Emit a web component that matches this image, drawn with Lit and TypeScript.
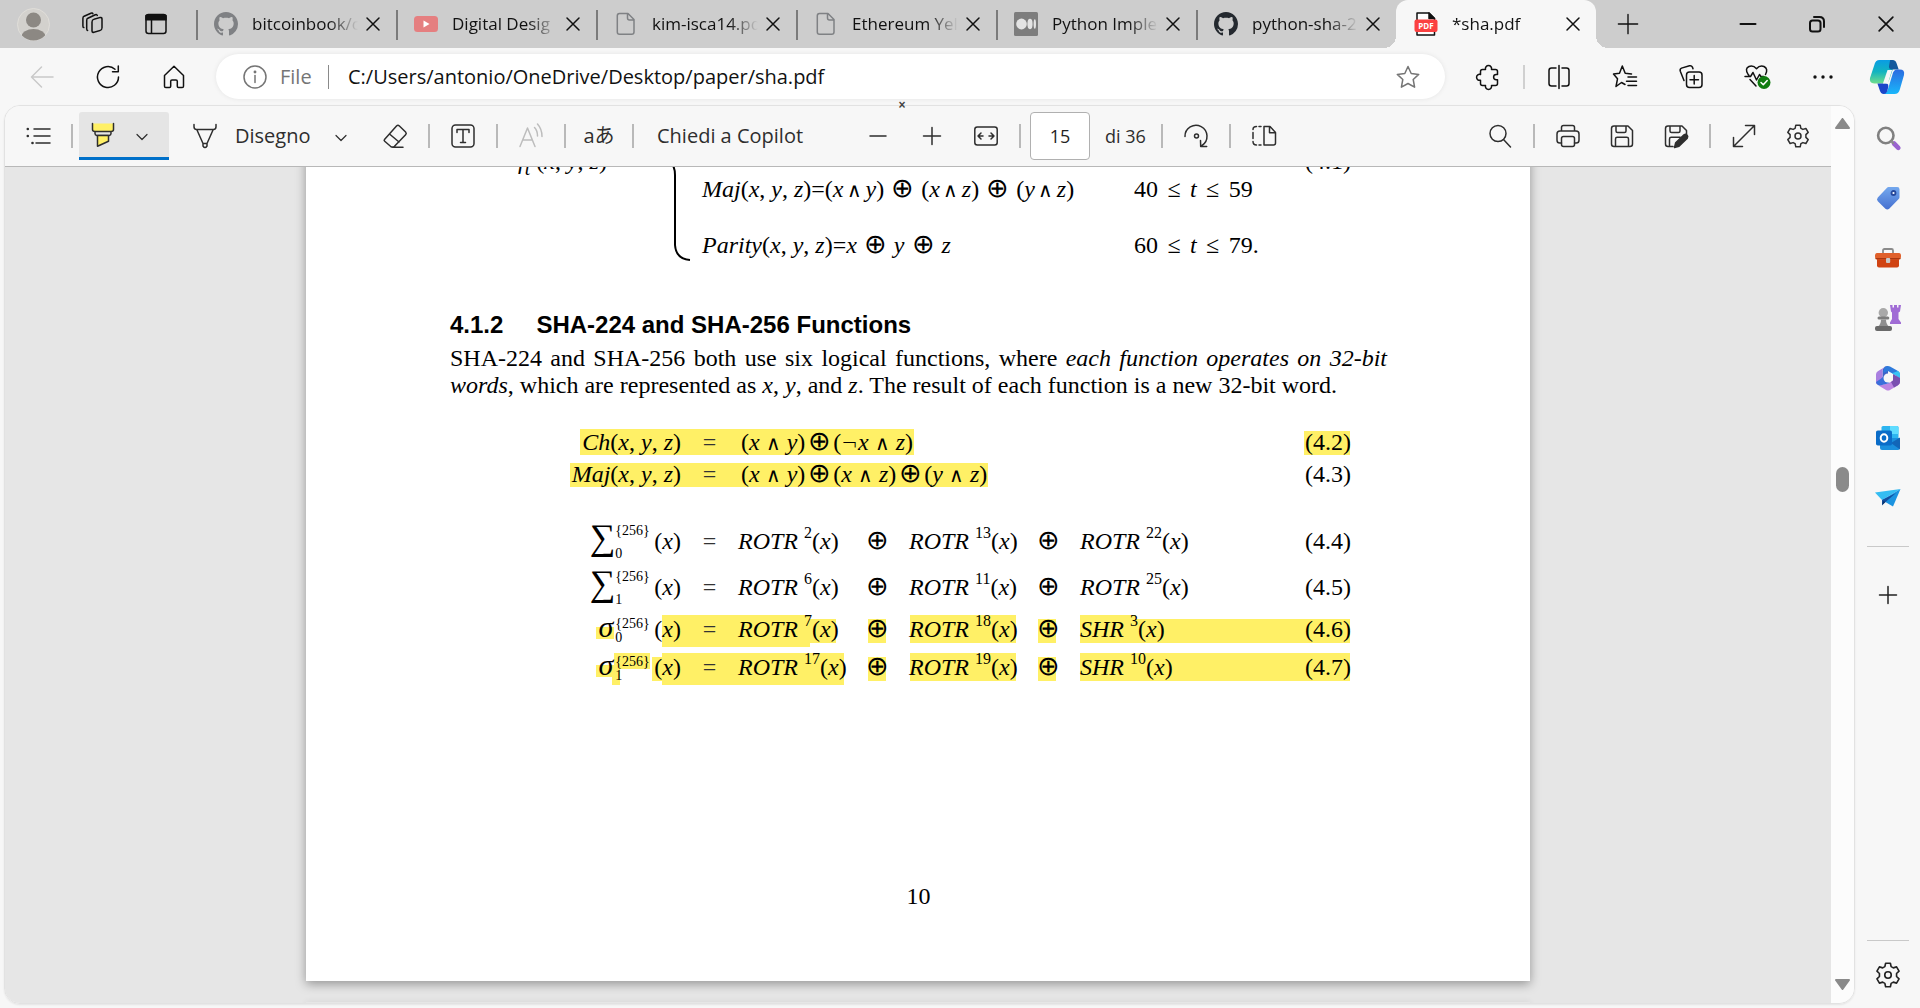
import { LitElement, html, css, svg, nothing, TemplateResult } from "lit";
import { customElement, property } from "lit/decorators.js";

type Shape = ReturnType<typeof svg>;

const plainIcons: Record<string, Shape> = {
  workspaces: svg`<rect x="11" y="6.500" width="10" height="13" rx="2" transform="skewY(-16) translate(0 4.500)"/><path d="M6.600 18.400q-.9-.2-.9-1.700V8.400q0-1.600 1.200-2.200l7.400-3.400q1.600-.6 2 .6"/><path d="M2.800 15.600q-.9-.2-.9-1.700V6.400q0-1.600 1.200-2.200l6.800-3q1.600-.6 2 .6"/>`,
  tabActions: svg`<rect x="2" y="2.500" width="20" height="19" rx="2.500"/><path d="M2 3.500h20v4.300H2z" fill="currentColor"/><path d="M7.500 8v13"/>`,
  back: svg`<path d="M23 12H2M11.500 2 1.500 12l10 10"/>`,
  refresh: svg`<path d="M22.500 12A10.500 10.500 0 1 1 19 4.200M22.300 1v5.700h-5.800"/>`,
  home: svg`<path d="M2.500 10.500 12 1.300l9.500 9.200v10.700q0 1.300-1.300 1.300h-3.700q-1.200 0-1.200-1.200v-5.100q0-1.300-1.300-1.300h-4q-1.300 0-1.300 1.300v5.100q0 1.200-1.200 1.200H3.800q-1.300 0-1.300-1.300z"/>`,
  info: svg`<circle cx="12" cy="12" r="11"/><path d="M12 10.500v7"/><circle cx="12" cy="7" r=".7" fill="currentColor"/>`,
  star: svg`<path d="m12 1.500 3.200 7 7.500.9-5.500 5.100 1.400 7.700-6.600-3.700-6.600 3.700 1.400-7.700L1.300 9.400l7.500-.9z"/>`,
  puzzle: svg`<path d="M3.500 6.500q0-2 2-2h3a3.100 3.100 0 1 1 6 0h4q2 0 2 2V9.500h-1.300a2.600 2.600 0 1 0 0 5.200h1.300v3.800q0 2-2 2h-4a3.100 3.100 0 1 1-6 0h-3q-2 0-2-2v-3.300a3 3 0 1 1 0-5.700z"/>`,
  split: svg`<path d="M9 3H4.500Q2 3 2 5.500v13Q2 21 4.500 21H9M15 3h4.500Q22 3 22 5.500v13q0 2.500-2.500 2.500H15M12 .5v23"/>`,
  favorites: svg`<path d="m12 19.500-3.500-2-5.500 4 1.500-7.700L.5 9l6-.8L9.300 1l2.900 7.200 6.300.8M15 12h8.500M13.500 16.300h10M15 20.600h8.500"/>`,
  collections: svg`<rect x="7.500" y="7" width="15.500" height="15.500" rx="3"/><path d="M15.200 10.500v8.500M11 14.700h8.500M5 15.500 1.300 6.200Q.6 4 2.500 3.100L10.500.8q2-.5 2.900 1.300l.6 1.700"/>`,
  dots: svg`<g fill="currentColor" stroke="none"><circle cx="4" cy="12" r="1.700"/><circle cx="12" cy="12" r="1.700"/><circle cx="20" cy="12" r="1.700"/></g>`,
  list: svg`<path d="M8 5h16M8 12h16M10 19h14"/><g fill="currentColor" stroke="none"><circle cx="1.800" cy="5" r="1.300"/><circle cx="1.800" cy="12" r="1.300"/><circle cx="6.500" cy="19" r="1.300"/></g>`,
  chevron: svg`<path d="m7 11.500 5 5 5-5" stroke-width="1.200"/>`,
  pen: svg`<path d="M1 .5v2.300Q1 5.500 3.500 5.500h17Q23 5.500 23 2.800V.5M4 6l6 13.500M20 6l-6 13.500M10 19.500h4V22q-2 3-4 0z"/>`,
  eraser: svg`<path d="m1.500 15.500 12-13.500Q15 .6 16.400 2l6.200 6q1.300 1.400 0 2.800L11.500 22.300q-2 1.600-4 0l-5.800-5q-1-.9-.2-1.800zM6.500 10l9.500 8M9.500 23.200H20"/>`,
  textBox: svg`<rect x="1" y="1" width="22" height="22" rx="3.500"/><path d="M6 8.500V5.500h12v3M12 5.500v13M9.500 18.500h5"/>`,
  readAloud: svg`<path d="M1 22.500 8.500 4 16 22.500M3.600 16h9.800M15.500 3.500q3 3 3 8.500M18.500 0q4.500 5 4.500 12.500"/>`,
  minus: svg`<path d="M4 12h16"/>`,
  plus: svg`<path d="M3.500 12h17M12 3.500v17"/>`,
  fit: svg`<rect x="0.800" y="3" width="22.400" height="18" rx="2.500"/><path d="M4 12h5M7 9l-3 3 3 3M20 12h-5M17 9l3 3-3 3"/>`,
  rotate: svg`<path d="M1 12.500A11 11 0 1 1 18 21.500M16.500 16.500 16.700 22.500h6"/><circle cx="12.500" cy="12" r="2"/>`,
  pageView: svg`<path d="M12 2.500h6l5.500 6V19q0 2-2 2H12zM17.500 2.500v6.200h6M9 2.500H7M4.500 2.500Q1 2.500 1 5.500M1 8.500v6M1 17.500q0 3.500 3.500 3.500M7 21h2"/>`,
  search: svg`<circle cx="10" cy="9.500" r="8"/><path d="m15.500 15.500 7 7.500"/>`,
  print: svg`<path d="M5.500 19H3.800Q1 19 1 16.200V10q0-3 3-3h16q3 0 3 3v6.200q0 2.800-2.800 2.800h-1.700M5.500 6.500v-3q0-2 2-2h9q2 0 2 2v3"/><rect x="5.500" y="12.500" width="13" height="10" rx="2"/>`,
  save: svg`<path d="M4 2h14l4.500 4.500V20q0 2.500-2.500 2.500H4Q1.500 22.500 1.500 20V4.500Q1.500 2 4 2zM6 2.500V7q0 1.500 1.500 1.500h7Q16 8.500 16 7V2.500M5.500 22v-7q0-1.700 1.700-1.700h9.600q1.700 0 1.700 1.700v7"/>`,
  saveAs: svg`<path d="M9 22.500H4Q1.500 22.500 1.500 20V4.500Q1.500 2 4 2h14l4.500 4.500V10M6 2.500V7q0 1.500 1.500 1.500h7Q16 8.500 16 7V2.500M5.500 22v-7q0-1.700 1.700-1.700h9"/><path d="m10.500 23.500 1.200-4.700 8.300-8q1.700-1 3 .3t.3 3l-8.300 8.200z" fill="currentColor"/>`,
  expand: svg`<path d="M22.500 1.500 1.500 22.500M13.500 1.500h9v9M1.500 13.500v9h9"/>`,
  gear: svg`<path d="M9.800 1.200h4.400l.7 3.100 2 1.100 3-.9 2.300 3.900-2.300 2.200v2.800l2.300 2.200-2.300 3.900-3-.9-2 1.100-.7 3.100H9.800l-.7-3.100-2-1.100-3 .9-2.300-3.900 2.300-2.200v-2.800L1.800 8.400l2.300-3.900 3 .9 2-1.100z"/><circle cx="12" cy="12" r="3"/>`,
  winMin: svg`<path d="M4.500 12h15" stroke-width="2"/>`,
  winRestore: svg`<g stroke-width="2"><rect x="5" y="8.500" width="10.500" height="11" rx="2.500"/><path d="M9 5h5.500q4.500 0 4.500 4.500V15"/></g>`,
  winClose: svg`<path d="m4.500 4.500 15 15M19.500 4.500l-15 15" stroke-width="1.800"/>`,
  close: svg`<path d="m6 6 12 12M18 6 6 18"/>`,
  addTab: svg`<path d="M12 1.500v21M1.500 12h21"/>`,
  file: svg`<path d="M5.500 1.500h8.500l6 6V20q0 2.300-2.300 2.300H5.500Q3.300 22.300 3.300 20V3.800q0-2.300 2.200-2.300zM13.500 1.500V6q0 2 2 2H20"/>`,
};

const github = svg`<path transform="scale(1.5)" fill="currentColor" stroke="none" d="M8 0C3.580 0 0 3.580 0 8c0 3.540 2.290 6.530 5.470 7.590.4.070.55-.17.55-.38 0-.19-.010-.82-.010-1.490-2.010.37-2.530-.49-2.690-.94-.090-.23-.48-.94-.82-1.130-.28-.15-.68-.52-.010-.53.63-.010 1.080.58 1.230.82.72 1.210 1.870.87 2.330.66.070-.52.28-.87.510-1.070-1.780-.2-3.640-.89-3.640-3.950 0-.87.31-1.590.82-2.150-.080-.2-.36-1.020.080-2.120 0 0 .67-.21 2.200.82.64-.18 1.320-.27 2-.27s1.360.090 2 .27c1.530-1.040 2.200-.82 2.200-.82.44 1.100.16 1.920.080 2.120.51.56.82 1.270.82 2.150 0 3.070-1.870 3.750-3.650 3.950.29.25.54.73.54 1.480 0 1.070-.010 1.930-.010 2.200 0 .21.15.46.55.38A8.010 8.010 0 0 0 16 8c0-4.420-3.580-8-8-8z"/>`;

const colourIcons: Record<string, Shape> = {
  github,
  youtube: svg`<g stroke="none"><rect x="0" y="4" width="24" height="16" rx="3.500" fill="#e57f80"/><path d="m9.500 8.500 6 3.500-6 3.500z" fill="#fff"/></g>`,
  medium: svg`<g stroke="none"><rect width="24" height="24" rx="1.500" fill="#7d7d7d"/><ellipse cx="7.500" cy="12" rx="5.300" ry="5.400" fill="#e4e4e4"/><ellipse cx="16" cy="12" rx="2.600" ry="5.200" fill="#e4e4e4"/><ellipse cx="20.800" cy="12" rx="1.200" ry="4.700" fill="#e4e4e4"/></g>`,
  pdf: svg`<path d="M3 1h12l5.500 5.500V23H3z" fill="#fff" stroke="#111" stroke-width="1.500"/><path d="M15 1v5.500h5.500z" fill="#111" stroke="#111"/><rect x=".5" y="7.500" width="23" height="12.500" rx="2" fill="#fb4141" stroke="none"/><text x="12" y="17" text-anchor="middle" class="pdf" stroke="none" fill="#fff">PDF</text>`,
  health: svg`<path d="m4 10.500-1-1.300Q-.5 3.500 4 1.500q4.300-1.500 7.500 2.300Q14.700 0 19 1.500q4.500 2.300 1.500 8M0 11.500h5.500L8 7.500l3.500 7.500 3-5.500 1.300 2h3M5 14.500l6 6.500"/><circle cx="19" cy="17.500" r="6.500" fill="#107c10" stroke="none"/><path d="m16 17.500 2.300 2.300 3.900-4.300" stroke="#fff"/>`,
  highlighter: svg`<path d="M2 .5h20V7q0 2-2 2H4Q2 9 2 7z" fill="#fff066" stroke="none"/><path d="M1.500.5v6Q1.500 8.500 4 8.500h16q2.500 0 2.500-2v-6M4 8.800v1.700q0 1.700 1.700 2h12.600q1.700-.3 1.700-2V8.800"/><path d="M6.500 12.500h11v5.700l-11 5z" fill="#fff066"/>`,
  copilot: svg`<g stroke="none"><path d="M9 0h11q4 0 3 4l-4 12q-1 5-4 6H4q-5 0-4-5L4 5q1-5 5-5z" fill="url(#cpA)"/><path d="M19 0h2q3 0 4 3l2 6h-6q-4 0-3-4 .5-3 1-5z" fill="#13599d"/><path d="M23 32H12q4-1 5-5l4-13q1-5 5-5h2q5 0 4 5l-4 14q-1 4-5 4z" fill="url(#cpB)"/><path d="M13 32q-3 0-4-4l-2-6h8q3 0 2 4-1 6-4 6z" fill="#1c45c9"/><path d="M16.500 9.500h4.300l-4 12.500h-4.600z" fill="#f7f7f7"/></g><defs><linearGradient id="cpA" x1="0" y1="0" x2="0" y2="1"><stop offset="0" stop-color="#0a9ce4"/><stop offset=".5" stop-color="#12b4c0"/><stop offset="1" stop-color="#6fdc8c"/></linearGradient><linearGradient id="cpB" x1="0" y1="0" x2="0" y2="1"><stop offset="0" stop-color="#2a6be0"/><stop offset="1" stop-color="#19b7fb"/></linearGradient></defs>`,
  sideSearch: svg`<circle cx="9.800" cy="9.500" r="7.700" fill="none" stroke="#808080" stroke-width="2.600"/><path d="m18 17.500 4.300 4.300" stroke="#9a63d0" stroke-width="4.600"/><path d="m15 15 2.300 2.300" stroke="#8a8a8a" stroke-width="2"/>`,
  tag: svg`<path d="M12.500 1h8.700Q23.500 1 23.500 3.300v8q0 1-.8 1.800l-9.500 9.700q-1.900 1.600-3.800 0l-7.600-7.600q-1.600-1.900 0-3.800l9-9.500q.8-.9 1.700-.9z" fill="url(#tg)" stroke="none"/><circle cx="17.500" cy="7" r="2" fill="#fff" stroke="#26489c" stroke-width="1.800"/><defs><linearGradient id="tg" x1="0" y1="0" x2="0" y2="1"><stop offset="0" stop-color="#74a8ee"/><stop offset="1" stop-color="#4570d0"/></linearGradient></defs>`,
  toolbox: svg`<path d="M7 8V4.500Q7 3 8.500 3h7Q17 3 17 4.500V8" stroke="#8b8b8b" stroke-width="1.800"/><path d="M1 13h22v6.500q0 2-2 2H3q-2 0-2-2z" fill="#d04312" stroke="none"/><path d="M1 7h22q2 0 2 3 0 3.500-2 3.500H1q-2 0-2-3.500 0-3 2-3z" fill="#e0602b" stroke="none"/><path d="M0 12.700h24" stroke="#9c2e0a" stroke-width="1"/><rect x="10" y="12" width="4.200" height="5" rx="1" fill="#c9c9c9" stroke="none"/>`,
  chess: svg`<g stroke="none"><path d="M14-1h2.500v2.500H18V-1h3v2.500h1.500V-1H25l-1 6.500-1.500 1V13l2.500 3.500V18H14v-1.500l2-3.500V6.500l-1-1z" fill="#a06cd5"/><circle cx="7.300" cy="6.700" r="4.700" fill="#a9a9a9"/><rect x="1.500" y="10.500" width="11.800" height="3" rx="1.500" fill="#7d7d7d"/><path d="M5 13.500h5q0 4.500 3 7H2q3-2.500 3-7z" fill="#8f8f8f"/><rect x="-1" y="20" width="17" height="5" rx="2" fill="#6a6a6a"/></g>`,
  m365: svg`<g stroke="none"><path d="M9 .5Q6.500 2 6.500 5v9l5.500-3V0z" fill="#3c63c8"/><path d="M10 .5Q2 5 1.500 5.600 0 6.500 0 8.500v8q0 2.500 2.500 2 2 0 4-1.500V5q0-3 3.500-4.500z" fill="#a97fe0"/><path d="M10 .5q2-1 4 0l8 4.500q2 1 2 3.500V13q-1-2-4-3.500L12 5 7.500 7V4q0-2 2.500-3.500z" fill="#2e7bdc"/><path d="M22 5q2 1 2 3.500V13q-1-2-4-3.500l-4-2.200z" fill="#38c3f4"/><path d="M24 12v4q0 2-2 3.200l-8 4.700q-2 1-4 0L2.500 19.500l9.500-2 5-3V9l3 1.500q3 1 4 1.500z" fill="#bd85e2"/><path d="M24 12v4q0 2-2 3.200l-4 2.300-3-5.500 2-1.500V8z" fill="#7a4fb0"/><path d="M0 16q1 4 5 3.300l9-2.300-6-3v-4l-3.500 3z" fill="#3a6fda"/><circle cx="12" cy="12" r="4.500" fill="#f7f7f7"/></g>`,
  outlook: svg`<g stroke="none"><rect x="5.500" y="0" width="17" height="16" rx="1.500" fill="#2db5f0"/><path d="M14 0h7q1.500 0 1.500 1.500V8H14z" fill="#5fdcff"/><path d="M4 12h20v10q0 2-2 2H6q-2 0-2-2z" fill="#1a8fdd"/><path d="m24 11.500-9 5.500 9 6.500z" fill="#1266b8"/><rect x="0" y="4.500" width="16" height="15" rx="1.800" fill="#0a6cc8"/></g><ellipse cx="8" cy="12" rx="3.300" ry="3.800" fill="none" stroke="#fff" stroke-width="2"/>`,
  plane: svg`<g stroke="none"><path d="M-1 6.500 24.500 3 6 14z" fill="#35bdf2"/><path d="M24.500 3 17 20.500 6 14z" fill="#1b93e0"/><path d="M6 14v5l14-12z" fill="#134f9e"/><path d="M6 19.500 9.500 16 7 15z" fill="#0b3570"/></g>`,
};

@customElement("ui-icon")
export class UiIcon extends LitElement {
  @property() name = "";
  @property({ type: Number }) size = 24;
  static styles = css`
    :host { display: inline-flex; flex: none; }
    svg { display: block; overflow: visible; fill: none; stroke: currentColor; stroke-width: 1.5; stroke-linejoin: round; stroke-linecap: round; }
    .pdf { font: 700 8px "Open Sans", sans-serif; }
  `;
  render() {
    const box = this.name === "copilot" ? 32 : 24;
    return html`<svg width=${this.size} height=${this.size} viewBox="0 0 ${box} ${box}" aria-hidden="true">${plainIcons[this.name] ?? colourIcons[this.name]}</svg>`;
  }
}

interface Tab { title: string; icon: string; tone?: string; active?: boolean; }

const tabs: Tab[] = [
  { title: "bitcoinbook/c", icon: "github", tone: "dim" },
  { title: "Digital Desig", icon: "youtube" },
  { title: "kim-isca14.pd", icon: "file", tone: "dim" },
  { title: "Ethereum Yel", icon: "file", tone: "dim" },
  { title: "Python Imple", icon: "medium" },
  { title: "python-sha-2", icon: "github", tone: "dark" },
  { title: "*sha.pdf", icon: "pdf", active: true },
];

@customElement("tab-strip")
export class TabStrip extends LitElement {
  static styles = css`
    :host { display: flex; height: 48px; background: #cdcdcd; color: #111; font: 17px/24px "Open Sans", sans-serif; }
    button { border: 0; padding: 0; background: none; color: inherit; display: flex; align-items: center; justify-content: center; }
    .lead { display: flex; padding-left: 3px; width: 196px; box-sizing: border-box; flex: none; }
    .lead button { width: 60px; }
    .lead button:last-child { width: 66px; }
    .avatar { display: block; }
    .tabs { display: flex; flex: 0 1 1400px; min-width: 0; }
    .tab { flex: 1 1 0; min-width: 0; display: flex; align-items: center; padding: 0 10px 0 18px; position: relative; box-sizing: border-box; }
    .tab::before { content: ""; position: absolute; left: 0; top: 10px; bottom: 8px; width: 2px; background: #7b7b7b; }
    .active { background: #f7f7f7; border-radius: 12px 12px 0 0; }
    .active::before { left: -12px; top: auto; bottom: 0; width: 12px; height: 12px; background: radial-gradient(circle at 0 0, #cdcdcd 12px, #f7f7f7 12px); }
    .active::after { content: ""; position: absolute; right: -12px; bottom: 0; width: 12px; height: 12px; background: radial-gradient(circle at 100% 0, #cdcdcd 12px, #f7f7f7 12px); }
    .title { flex: 1; min-width: 0; margin-left: 14px; overflow: hidden; white-space: nowrap; color: inherit; text-decoration: none; -webkit-mask-image: linear-gradient(90deg, #000 72%, transparent); mask-image: linear-gradient(90deg, #000 72%, transparent); }
    .close { width: 26px; height: 26px; margin-left: 2px; }
    .dim { color: #7f8184; }
    .dark { color: #24292f; }
    .add { width: 64px; }
    .window { display: flex; margin-left: auto; }
    .window button { width: 69px; }
  `;
  render() {
    return html`
      <div class="lead">
        <button aria-label="Profile"><svg class="avatar" width="33" height="33" viewBox="0 0 33 33"><defs><clipPath id="c"><circle cx="16.500" cy="16.500" r="16"/></clipPath></defs><circle cx="16.500" cy="16.500" r="16" fill="#d3d1cd" stroke="#e0ded9"/><g fill="#8c8883" clip-path="url(#c)"><circle cx="16.500" cy="12" r="7.500"/><ellipse cx="16.500" cy="29" rx="12" ry="8"/></g></svg></button>
        <button aria-label="Workspaces"><ui-icon name="workspaces"></ui-icon></button>
        <button aria-label="Tab actions"><ui-icon name="tabActions"></ui-icon></button>
      </div>
      <div class="tabs">
        ${tabs.map((t) => html`<div class="tab ${t.active ? "active" : ""}">
          <ui-icon class=${t.tone ?? nothing} name=${t.icon}></ui-icon>
          <a class="title" href="#">${t.title}</a>
          <button class="close" aria-label="Close tab"><ui-icon name="close"></ui-icon></button>
        </div>`)}
      </div>
      <button class="add" aria-label="New tab"><ui-icon name="addTab" size="22"></ui-icon></button>
      <div class="window">
        <button aria-label="Minimize"><ui-icon name="winMin"></ui-icon></button>
        <button aria-label="Restore"><ui-icon name="winRestore"></ui-icon></button>
        <button aria-label="Close"><ui-icon name="winClose" size="22"></ui-icon></button>
      </div>`;
  }
}

@customElement("address-row")
export class AddressRow extends LitElement {
  static styles = css`
    :host { display: flex; align-items: center; height: 57px; padding: 0 2px 0 9px; box-sizing: border-box; color: #111; font: 20px/28px "Open Sans", sans-serif; }
    button { width: 66px; height: 48px; flex: none; border: 0; padding: 0; background: none; color: inherit; display: flex; align-items: center; justify-content: center; }
    button[disabled] { color: #c9c9c9; }
    .box { flex: 1; min-width: 0; height: 45px; margin: 0 11px 0 9px; padding: 0 25px 0 27px; box-sizing: border-box; border-radius: 23px; background: #fff; display: flex; align-items: center; box-shadow: 0 0 5px #00000014; color: #757575; }
    .scheme { margin: 0 0 0 13px; width: 48px; }
    .bar { width: 1px; height: 24px; background: #8a8a8a; }
    input { flex: 1; min-width: 0; margin-left: 19px; border: 0; padding: 0; font: inherit; color: #111; background: none; outline: 0; }
    .box button { width: 24px; }
    .line { width: 2px; height: 24px; margin: 0 1px; background: #d0d0d0; }
    .copilot { width: 62px; }
  `;
  render() {
    return html`
      <button disabled aria-label="Back"><ui-icon name="back"></ui-icon></button>
      <button aria-label="Refresh"><ui-icon name="refresh"></ui-icon></button>
      <button aria-label="Home"><ui-icon name="home"></ui-icon></button>
      <div class="box">
        <ui-icon name="info"></ui-icon><label class="scheme" for="url">File</label><span class="bar"></span>
        <input id="url" value="C:/Users/antonio/OneDrive/Desktop/paper/sha.pdf" />
        <button aria-label="Add to favorites"><ui-icon name="star"></ui-icon></button>
      </div>
      <button aria-label="Extensions"><ui-icon name="puzzle"></ui-icon></button>
      <span class="line"></span>
      ${["split", "favorites", "collections", "health", "dots"].map((n) => html`<button aria-label=${n}><ui-icon name=${n}></ui-icon></button>`)}
      <button class="copilot" aria-label="Copilot"><ui-icon name="copilot" size="34"></ui-icon></button>`;
  }
}

@customElement("pdf-toolbar")
export class PdfToolbar extends LitElement {
  static styles = css`
    :host { display: flex; align-items: center; height: 61px; padding: 0 6px 0 0; box-sizing: border-box; background: #f7f7f7; border-bottom: 1px solid #b8b8b8; color: #2e2e2e; font: 20px/28px "Open Sans", sans-serif; }
    button { width: 54px; height: 48px; flex: none; border: 0; padding: 0; background: none; color: inherit; font: inherit; display: flex; align-items: center; justify-content: center; }
    button[disabled] { color: #bdbdbd; }
    .wide { width: 66px; }
    .sep { width: 2px; height: 24px; flex: none; background: #b9b9b9; }
    .group { margin: 0 6px; }
    .mark { display: flex; margin-left: 6px; background: #e5e5e5; border-radius: 3px 3px 0 0; border-bottom: 3px solid #0070c9; height: 45px; }
    .mark button { width: 48px; height: 45px; }
    .mark .more { width: 42px; padding-left: 3px; justify-content: flex-start; }
    .draw { width: 193px; padding: 0 9px 0 24px; justify-content: flex-start; gap: 18px; }
    .draw ui-icon:last-child { margin-left: auto; }
    .ask { width: 217px; padding-left: 23px; justify-content: flex-start; }
    .page { width: 60px; height: 48px; box-sizing: border-box; margin-left: 9px; border: 1px solid #b0b0b0; border-radius: 4px; background: #fff; font: 18px/24px "Open Sans", sans-serif; color: #222; text-align: center; padding: 0; }
    .fit { margin-right: 6px; }
    .total { width: 71px; padding-left: 15px; box-sizing: border-box; font-size: 18px; white-space: nowrap; }
    .gap { flex: 1; }
    .kana { font: 20px/28px "Open Sans", "Noto Sans CJK JP", sans-serif; }
  `;
  render() {
    const sep = html`<span class="sep"></span>`;
    const btn = (name: string, cls = ""): TemplateResult => html`<button class=${cls} aria-label=${name}><ui-icon name=${name}></ui-icon></button>`;
    return html`
      ${btn("list", "wide")}${sep}
      <div class="mark">
        <button aria-label="Highlight"><ui-icon name="highlighter"></ui-icon></button>
        <button class="more" aria-label="Highlight colours"><ui-icon name="chevron"></ui-icon></button>
      </div>
      <button class="draw"><ui-icon name="pen"></ui-icon><span>Disegno</span><ui-icon name="chevron"></ui-icon></button>
      ${btn("eraser", "wide")}${sep}${btn("textBox", "wide")}${sep}
      <button class="wide" disabled aria-label="Read aloud"><ui-icon name="readAloud"></ui-icon></button>${sep}
      <button class="wide kana">aあ</button>${sep}
      <button class="ask">Chiedi a Copilot</button>
      ${btn("minus")}${btn("plus")}${btn("fit", "fit")}${sep}
      <input class="page" aria-label="Page" value="15" /><span class="total">di 36</span>${sep}
      ${btn("rotate", "wide")}${sep}${btn("pageView", "wide")}
      <span class="gap"></span>
      ${btn("search")}<span class="sep group"></span>${btn("print")}${btn("save")}${btn("saveAs")}<span class="sep group"></span>${btn("expand")}${btn("gear")}`;
  }
}

/* Highlight annotations over the equations: x, y, width, height from the block's corner. */
const marks = [
  [130, 3, 334, 26], [854, 5, 46, 24], [120, 37, 418, 24],
  [146, 201, 18, 12], [212, 189, 148, 32], [360, 193, 26, 24], [418, 193, 18, 24], [460, 189, 106, 28], [588, 193, 18, 24], [630, 189, 56, 28], [686, 193, 214, 24],
  [146, 239, 18, 12], [164, 227, 36, 16], [162, 243, 8, 16], [202, 231, 10, 24], [212, 227, 182, 32], [418, 231, 18, 24], [460, 227, 106, 28], [588, 231, 18, 24], [630, 227, 270, 28],
];

@customElement("pdf-page")
export class PdfPage extends LitElement {
  static styles = css`
    :host { display: flex; flex-direction: column; box-sizing: border-box; padding: 0 143px 71px 144px; background: #fff; color: #000; box-shadow: 0 3px 10px #0000005c; font: 24px/28px "Liberation Serif", serif; }
    p, h2 { margin: 0; }
    i { white-space: nowrap; }
    .cases { display: grid; grid-template-columns: 222px 30px 432px 1fr auto; padding-right: 36px; white-space: nowrap; }
    .fn { padding-left: 68px; }
    .brace { display: block; fill: none; stroke: #000; stroke-width: 2; }
    .col { display: flex; flex-direction: column; gap: 16px; padding-top: 22px; line-height: 40px; }
    h2 { display: flex; gap: 33px; margin-top: 46px; font: 700 24px/27px "Liberation Sans", sans-serif; }
    .para { margin-top: 7px; line-height: 27px; text-align: justify; }
    .eqs { position: relative; margin-top: 27px; padding-right: 36px; }
    .marks { position: absolute; left: 0; top: 0; fill: #fff066; overflow: visible; }
    .row { position: relative; display: grid; align-items: baseline; grid-template-columns: 231px 57px 130px 41px 130px 41px 1fr auto; white-space: nowrap; }
    .logic { height: 32px; line-height: 32px; }
    .sum { height: 46px; line-height: 46px; }
    .sig { height: 38px; line-height: 38px; }
    .first { margin-top: 28px; }
    .lhs { text-align: right; }
    .eq { text-align: center; color: #333; }
    .rhs { grid-column: 3 / 8; padding-left: 3px; }
    .plus, .and, .not { font-family: "DejaVu Sans", sans-serif; font-weight: 200; line-height: 0; }
    .plus { font-size: 27px; }
    .row > .plus { margin-left: -2px; }
    .and { font-size: 20px; }
    .not { font-size: 20px; }
    .op { display: inline-block; width: 25px; text-align: center; }
    .and { display: inline-block; width: 22px; text-align: center; }
    .rhs .and { width: 27px; }
    .rhs .op { width: 28px; }
    .le { display: inline-block; width: 32px; text-align: center; }
    sup { font-size: 16px; line-height: 0; vertical-align: 11px; }
    .stack { display: inline-flex; flex-direction: column; width: 34px; margin-right: 5px; font-size: 14px; text-align: left; }
    .sum .stack { line-height: 23px; vertical-align: 14px; }
    .sig .stack { line-height: 14px; vertical-align: 9px; }
    .big { font-size: 36px; line-height: 0; }
    .sigma { font-style: italic; font-size: 30px; line-height: 0; margin-right: 2px; }
    .folio { margin-top: auto; text-align: center; }
  `;
  render() {
    const plus = html`<span class="op plus">⊕</span>`;
    const and = html`<span class="and">∧</span>`;
    const arg = html`(<i>x</i>)`;
    const term = (name: string, n: string) => html`<span><i>${name}</i> <sup>${n}</sup>${arg}</span>`;
    const line = (cls: string, sym: TemplateResult, sub: string, terms: [string, string][], no: string) => html`
      <div class="row ${cls}">
        <span class="lhs">${sym}<span class="stack"><span>{256}</span><span>${sub}</span></span>${arg}</span>
        <span class="eq">=</span>${term(...terms[0])}<span class="plus">⊕</span>${term(...terms[1])}<span class="plus">⊕</span>${term(...terms[2])}<span>${no}</span>
      </div>`;
    const sum = html`<span class="big">∑</span>`;
    const sigma = html`<span class="sigma">σ</span>`;
    return html`
      <section class="cases">
        <div class="fn"><i>f<sub>t</sub></i> (<i>x</i>, <i>y</i>, <i>z</i>)</div>
        <svg class="brace" width="20" height="114" viewBox="0 0 20 114"><path d="M0 17Q3 21 3 28V98Q4 112 18 113"/></svg>
        <div class="col">
          <span><i>Maj</i>(<i>x</i>, <i>y</i>, <i>z</i>)=(<i>x</i>${and}<i>y</i>) ${plus} (<i>x</i>${and}<i>z</i>) ${plus} (<i>y</i>${and}<i>z</i>)</span>
          <span><i>Parity</i>(<i>x</i>, <i>y</i>, <i>z</i>)=<i>x</i> ${plus} <i>y</i> ${plus} <i>z</i></span>
        </div>
        <div class="col">
          <span>40<span class="le">≤</span><i>t</i><span class="le">≤</span>59</span>
          <span>60<span class="le">≤</span><i>t</i><span class="le">≤</span>79.</span>
        </div>
        <div>(4.1)</div>
      </section>
      <h2><span>4.1.2</span><span>SHA-224 and SHA-256 Functions</span></h2>
      <p class="para">SHA-224 and SHA-256 both use six logical functions, where <em>each function operates on 32-bit words</em>, which are represented as <em>x</em>, <em>y</em>, and <em>z</em>. The result of each function is a new 32-bit word.</p>
      <section class="eqs">
        <svg class="marks" width="937" height="260" viewBox="0 0 937 260" aria-hidden="true">${marks.map(([x, y, w, h]) => svg`<rect x=${x} y=${y} width=${w} height=${h}/>`)}</svg>
        <div class="row logic"><span class="lhs"><i>Ch</i>(<i>x</i>, <i>y</i>, <i>z</i>)</span><span class="eq">=</span><span class="rhs">(<i>x</i>${and}<i>y</i>)${plus}(<span class="not">¬</span><i>x</i>${and}<i>z</i>)</span><span>(4.2)</span></div>
        <div class="row logic"><span class="lhs"><i>Maj</i>(<i>x</i>, <i>y</i>, <i>z</i>)</span><span class="eq">=</span><span class="rhs">(<i>x</i>${and}<i>y</i>)${plus}(<i>x</i>${and}<i>z</i>)${plus}(<i>y</i>${and}<i>z</i>)</span><span>(4.3)</span></div>
        ${line("sum first", sum, "0", [["ROTR", "2"], ["ROTR", "13"], ["ROTR", "22"]], "(4.4)")}
        ${line("sum", sum, "1", [["ROTR", "6"], ["ROTR", "11"], ["ROTR", "25"]], "(4.5)")}
        ${line("sig", sigma, "0", [["ROTR", "7"], ["ROTR", "18"], ["SHR", "3"]], "(4.6)")}
        ${line("sig", sigma, "1", [["ROTR", "17"], ["ROTR", "19"], ["SHR", "10"]], "(4.7)")}
      </section>
      <p class="folio">10</p>`;
  }
}

@customElement("app-root")
export class AppRoot extends LitElement {
  static styles = css`
    :host { display: flex; flex-direction: column; height: 100vh; background: #f7f7f7; overflow: hidden; position: relative; }
    .body { flex: 1; min-height: 0; display: flex; }
    .frame { flex: 1; min-width: 0; display: flex; margin: 0 0 4px 4px; border: 1px solid #e2e2e2; border-radius: 16px; overflow: hidden; box-shadow: 0 1px 2px #00000014; }
    .doc { flex: 1; min-width: 0; display: flex; flex-direction: column; }
    .view { flex: 1; min-height: 0; overflow: hidden; background: #e6e6e6; display: flex; flex-direction: column; align-items: center; }
    pdf-page { width: 100%; max-width: 1224px; flex: 1; margin: -20px 0 21px; }
    .next { width: 100%; max-width: 1224px; height: 1px; flex: none; box-shadow: 0 1px 6px #0000004d; }
    .scroll { width: 23px; background: #fcfcfc; display: flex; flex-direction: column; align-items: center; padding: 12px 0 13px; box-sizing: border-box; color: #8a8a8a; }
    .track { flex: 1; display: grid; grid-template-rows: 337fr 25fr 486fr; }
    .thumb { grid-row: 2; width: 13px; border-radius: 7px; background: #8a8a8a; }
    .side { width: 65px; flex: none; display: flex; flex-direction: column; align-items: center; padding-bottom: 3px; color: #222; }
    .side button { width: 48px; height: 60px; border: 0; padding: 0; background: none; color: inherit; display: flex; align-items: center; justify-content: center; }
    .apps { padding-top: 3px; }
    .rule { width: 42px; height: 1px; background: #c9c9c9; margin: 18px 0; }
    .foot { margin: auto 0 4px; }
    .grip { position: absolute; left: 897px; top: 100px; width: 10px; height: 10px; border: 0; padding: 0; background: none; color: #444; font: 700 12px/10px "Liberation Sans", sans-serif; }
  `;
  render() {
    const apps = ["sideSearch", "tag", "toolbox", "chess", "m365", "outlook", "plane"];
    return html`
      <tab-strip></tab-strip>
      <address-row></address-row>
      <div class="body">
        <main class="frame">
          <div class="doc">
            <pdf-toolbar></pdf-toolbar>
            <div class="view"><pdf-page></pdf-page><div class="next"></div></div>
          </div>
          <div class="scroll">
            <svg width="15" height="11" viewBox="0 0 15 11"><path d="M7.500 1 14 10H1z" fill="currentColor" stroke="currentColor" stroke-width="2" stroke-linejoin="round"/></svg>
            <div class="track"><div class="thumb"></div></div>
            <svg width="15" height="11" viewBox="0 0 15 11"><path d="M7.500 10 1 1h13z" fill="currentColor" stroke="currentColor" stroke-width="2" stroke-linejoin="round"/></svg>
          </div>
        </main>
        <nav class="side">
          <div class="apps">${apps.map((n) => html`<button aria-label=${n}><ui-icon name=${n}></ui-icon></button>`)}</div>
          <div class="rule"></div>
          <button aria-label="Customize"><ui-icon name="plus"></ui-icon></button>
          <div class="rule foot"></div>
          <button aria-label="Settings"><ui-icon name="gear" size="26"></ui-icon></button>
        </nav>
      </div>
      <button class="grip" aria-label="Dismiss">×</button>`;
  }
}
